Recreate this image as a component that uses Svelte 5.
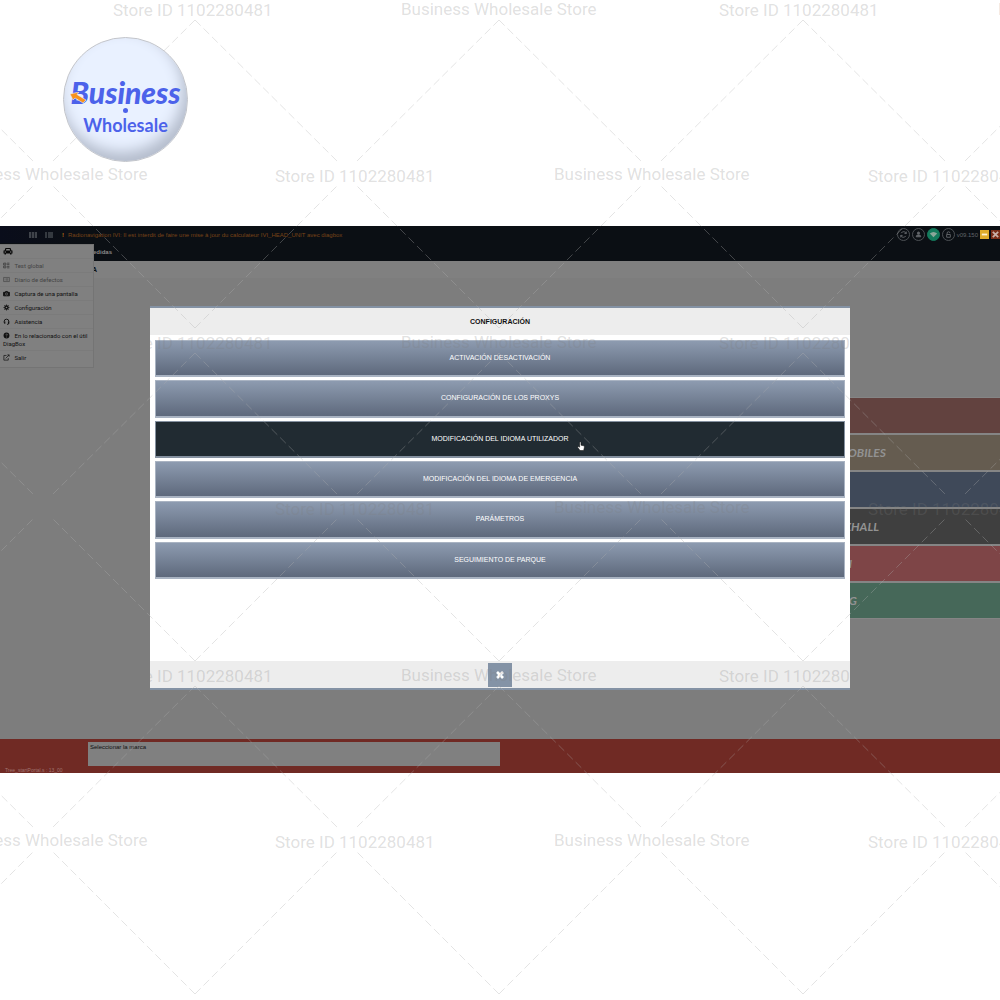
<script lang="ts">
  const options = [
    'ACTIVACIÓN DESACTIVACIÓN',
    'CONFIGURACIÓN DE LOS PROXYS',
    'MODIFICACIÓN DEL IDIOMA UTILIZADOR',
    'MODIFICACIÓN DEL IDIOMA DE EMERGENCIA',
    'PARÁMETROS',
    'SEGUIMIENTO DE PARQUE',
  ];

  let selected = $state(2);

  const menu = [
    { icon: 'test', label: 'Test global', disabled: true },
    { icon: 'list', label: 'Diario de defectos', disabled: true },
    { icon: 'camera', label: 'Captura de una pantalla', disabled: false },
    { icon: 'gear', label: 'Configuración', disabled: false },
    { icon: 'headset', label: 'Asistencia', disabled: false },
    { icon: 'help', label: 'En lo relacionado con el útil DiagBox', disabled: false },
    { icon: 'exit', label: 'Salir', disabled: false },
  ];

  // end is where the label stops, as a share of the bar
  const brands = [
    { label: '', color: '#62423f', end: 0 },
    { label: 'MOBILES', color: '#655c50', end: 77.2 },
    { label: '', color: '#3f4959', end: 0 },
    { label: 'XHALL', color: '#3f3f3f', end: 75.8 },
    { label: 'N', color: '#7e4547', end: 70.4 },
    { label: 'G', color: '#466859', end: 71.4 },
  ];

  const store = 'Store ID 1102280481';
  const name = 'Business Wholesale Store';

  const marks: { x: number; y: number; text: string }[] = [];
  const lines: string[] = [];
  for (let i = 0; i < 3; i++) {
    const y = i * 333;
    marks.push(
      { x: 113, y: y + 16, text: store },
      { x: 401, y: y + 15, text: name },
      { x: 719, y: y + 16, text: store },
      { x: 998, y: y + 15, text: name },
      { x: -48, y: y + 180, text: name },
      { x: 275, y: y + 182, text: store },
      { x: 554, y: y + 180, text: name },
      { x: 868, y: y + 182, text: store },
    );
    for (let k = 0; k < 5; k++) {
      const x = -109 + k * 304;
      lines.push(`M${x} ${y + 20}l144 143M${x} ${y + 20}l-144 143`);
      lines.push(`M${x} ${y + 328}l144 -144M${x} ${y + 328}l-144 -144`);
    }
  }
</script>

<div class="page">
  <header class="banner">
    <div class="logo">
      <span class="logo-name">Business</span>
      <svg class="arrow" viewBox="0 0 16 11"><path d="M0 2L9 0L7 2.5L16 8L13 11L5 6L3 8Z" fill="#f7931e" stroke="#e9f1ff" stroke-width=".6" /></svg>
      <span class="logo-dot"></span>
      <span class="logo-sub">Wholesale</span>
    </div>
  </header>

  <main class="screen">
    <div class="topbar">
      <div class="tools">
        <svg viewBox="0 0 8 6"><path d="M0 1h8M0 3h8M0 5h8" stroke="#51565b" stroke-width="1.4" stroke-dasharray="2.2 .7" /></svg>
        <svg viewBox="0 0 8 6"><path d="M0 1h2M3 1h5M0 3h2M3 3h5M0 5h2M3 5h5" stroke="#43484d" stroke-width="1.4" /></svg>
      </div>
      <p class="warning"><b>!</b>Radionavigation IVI: Il est interdit de faire une mise à jour du calculateur IVI_HEAD_UNIT avec diagbox</p>
      <div class="status">
        <button aria-label="Actualizar"><svg viewBox="0 0 12 12"><path d="M9 5A3 3 0 0 0 3.5 4.5M3 7a3 3 0 0 0 5.5.5M9 2.8V5H7M3 9.2V7h2" /></svg></button>
        <button aria-label="Usuario"><svg viewBox="0 0 12 12"><path d="M3.5 8.5c0-2 1.3-2 2.5-2s2.5 0 2.5 2z" fill="#62666a" /><circle cx="6" cy="4.5" r="1.2" fill="#62666a" /></svg></button>
        <button class="online" aria-label="Red"><svg viewBox="0 0 12 12"><path d="M2 4.8Q6 1.500 10 4.800L6 9Z" fill="#8ba79a" stroke="none" /></svg></button>
        <button aria-label="Bloqueo"><svg viewBox="0 0 12 12"><path d="M4.5 6V4.500a1.5 1.5 0 0 1 3 0M4 6h4v3H4z" /></svg></button>
        <span class="version">v09.150</span>
        <button class="win min" aria-label="Minimizar"><svg viewBox="0 0 10 10"><path d="M2 5h6" /></svg></button>
        <button class="win close" aria-label="Salir"><svg viewBox="0 0 10 10"><path d="M2 2l6 6M8 2L2 8" /></svg></button>
      </div>
    </div>
    <div class="tabs">Medidas</div>
    <div class="crumb">A</div>

    <nav class="menu">
      <div class="menu-head">
        <svg viewBox="0 0 20 16"><path d="M3 7L5 2h10l2 5h2v6h-2v2h-3v-2H6v2H3v-2H1V7z" fill="#080808" /><path d="M5.5 7l1.2-3h6.600l1.2 3z" fill="#808080" /><circle cx="4.5" cy="10" r="1.4" fill="#808080" /><circle cx="15.5" cy="10" r="1.4" fill="#808080" /></svg>
      </div>
      {#each menu as item}
        <button class="menu-item" disabled={item.disabled}>
          <svg viewBox="0 0 12 12" fill="none" stroke="currentColor" stroke-width="1.6">
            {#if item.icon === 'test'}
              <path d="M1 2h4v3H1zM1 7h4v3H1zM7 2h4M7 4.5h4M7 7.5h4M7 10h4" />
            {:else if item.icon === 'list'}
              <path d="M1 2.5h10v7H1zM3 5h1M5 5h4M3 7h1M5 7h4" stroke-width="1.1" />
            {:else if item.icon === 'camera'}
              <path d="M1 4h2.5l1-1.5h3l1 1.5H11v6H1z" fill="currentColor" /><circle cx="6" cy="6.8" r="1.8" stroke="#808080" stroke-width="1" />
            {:else if item.icon === 'gear'}
              <circle cx="6" cy="6" r="2.6" stroke-width="2.4" /><path d="M6 1v2M6 9v2M1 6h2M9 6h2M2.500 2.500l1 1M8.500 8.500l1 1M9.500 2.500l-1 1M3.500 8.500l-1 1" />
            {:else if item.icon === 'headset'}
              <path d="M2 8V6a4 4 0 0 1 8 0v2M10 9q0 2-3 2" /><path d="M3 6v4M9.500 6v4" stroke-width="2" />
            {:else if item.icon === 'help'}
              <circle cx="6" cy="6" r="5" fill="currentColor" stroke="none" /><path d="M4.5 4.500q1.5-1.500 3 0q0 1-1.500 1.800M6 8v1.400" stroke="#808080" stroke-width="1.2" />
            {:else}
              <path d="M6 2.5H1.5v8H9V7M4.5 7.500L10.500 1.500M7.500 1.500h3v3" stroke-width="1.2" />
            {/if}
          </svg>
          <span>{item.label}</span>
        </button>
      {/each}
    </nav>

    <div class="brands">
      {#each brands as brand}
        <a class="brand" href="#marca" style:background={brand.color} aria-label="Marca">
          <span style:width="{brand.end}%">{brand.label}</span>
        </a>
      {/each}
    </div>

    <footer class="bottom">
      <span class="trace">Tree_startPortal.s : 13_00</span>
      <p class="hint">Seleccionar la marca</p>
    </footer>

    <div class="modal" role="dialog" aria-labelledby="title">
      <h1 id="title">CONFIGURACIÓN</h1>
      <div class="options">
        {#each options as option, i}
          <button class="option" class:active={i === selected} onclick={() => (selected = i)}>{option}</button>
        {/each}
      </div>
      <div class="modal-foot">
        <button class="dismiss" aria-label="Cerrar">
          <svg viewBox="0 0 10 10"><path d="M2 2l6 6M8 2L2 8" stroke="#fff" stroke-width="2.8" /></svg>
        </button>
      </div>
      <svg class="pointer" viewBox="0 0 12 16"><path d="M4 1.5q1.2-1 2 0V6l4 1q1.5.5 1 2.5l-1 4.500H4.500L1 9q0-1.500 1.500-1L4 9z" fill="#fff" stroke="#111" stroke-width=".8" /></svg>
    </div>
  </main>

  <svg class="watermark" aria-hidden="true">
    <path d={lines.join('')} />
    {#each marks as mark}
      <text x={mark.x} y={mark.y}>{mark.text}</text>
    {/each}
  </svg>
</div>

<style>
  :global(body) {
    background: #fff;
  }

  .page {
    position: relative;
    min-height: 100vh;
    overflow: hidden;
    font-family: "Liberation Sans", Arial, sans-serif;
    font-size: 6px;
    line-height: 8px;
    color: #111;
  }

  .page *,
  .page {
    box-sizing: border-box;
  }

  button {
    font: inherit;
    color: inherit;
    margin: 0;
    padding: 0;
    border: 0;
    background: none;
    cursor: pointer;
  }

  svg {
    display: block;
    flex: none;
  }

  .banner {
    padding: 37px 63px 64px;
  }

  .logo {
    position: relative;
    z-index: 1;
    display: flex;
    flex-direction: column;
    align-items: center;
    width: 125px;
    height: 125px;
    padding-top: 38px;
    border: 1px solid #c3c5ca;
    border-radius: 50%;
    background: #e9f1ff;
    box-shadow: inset -4px -9px 14px #b4bccc;
    color: #4c62ea;
    font-family: Lato, sans-serif;
  }

  .logo-name {
    font-size: 30px;
    line-height: 32px;
    font-weight: 900;
    font-style: italic;
  }

  .arrow {
    position: absolute;
    left: 6px;
    top: 54px;
    width: 16px;
    height: 11px;
  }

  .logo-dot {
    width: 5px;
    height: 5px;
    border-radius: 50%;
    background: currentColor;
  }

  .logo-sub {
    font-size: 18px;
    line-height: 24px;
    font-weight: 700;
  }

  .screen {
    position: relative;
    display: flex;
    flex-direction: column;
    background: #7d7d7d;
  }

  .topbar {
    display: flex;
    align-items: center;
    height: 17px;
    padding-left: 29px;
    background: linear-gradient(90deg, #0a0d1b, #0b0f14 80px);
  }

  .tools {
    display: flex;
    gap: 8px;
  }

  .tools svg {
    width: 8px;
    height: 6px;
  }

  .warning {
    margin: 0 0 0 9px;
    color: #7a4418;
    white-space: nowrap;
  }

  .warning b {
    margin-right: 4px;
    color: #b87418;
  }

  .status {
    display: flex;
    align-items: center;
    gap: 2px;
    margin-left: auto;
    color: #62666a;
  }

  .status button {
    width: 13px;
    height: 13px;
    border: 1px solid #4c5054;
    border-radius: 50%;
  }

  .status svg {
    width: 100%;
    fill: none;
    stroke: #62666a;
    stroke-width: 1;
  }

  .status .online {
    border-color: #147a5c;
    background: #147a5c;
  }

  .status .win {
    width: 9px;
    height: 9px;
    border: 0;
    border-radius: 0;
  }

  .status .min {
    background: #dfad2b;
  }

  .status .close {
    background: #7a2d18;
  }

  .status .win svg {
    stroke: #fff3d0;
    stroke-width: 2;
  }

  .status .close svg {
    stroke: #c8b0a8;
  }

  .tabs {
    height: 18px;
    padding: 5px 0 0 88px;
    background: #0b0f14;
    color: #8a8a8a;
    font-weight: 700;
  }

  .crumb {
    height: 17px;
    padding: 5px 0 0 92px;
    background: #808080;
    font-size: 7px;
    font-weight: 700;
  }

  .menu {
    position: absolute;
    top: 18px;
    left: 0;
    width: 94px;
    padding-bottom: 3px;
    background: #808080;
    border: 1px solid #747474;
    border-left: 0;
  }

  .menu-head {
    padding: 1px 0 2px 3px;
  }

  .menu-head svg {
    width: 10px;
    height: 10px;
  }

  .menu-item {
    display: block;
    width: 100%;
    padding: 3px 3px 2px;
    border-top: 1px solid #7b7b7b;
    font-family: Roboto, sans-serif;
    line-height: 8px;
    text-align: left;
  }

  .menu-item:disabled {
    color: #444;
  }

  .menu-item svg {
    display: inline-block;
    width: 7px;
    height: 7px;
    margin-right: 3px;
    vertical-align: -1px;
  }

  .brands {
    display: flex;
    flex-direction: column;
    gap: 2px;
    margin-left: 50%;
    padding: 120px 0 121px;
  }

  .brand {
    display: flex;
    align-items: center;
    height: 35px;
    outline: 1px solid #858585;
    color: #929292;
    font-family: Lato, sans-serif;
    font-size: 12px;
    line-height: 16px;
    font-weight: 700;
    font-style: italic;
    text-decoration: none;
  }

  .brand span {
    text-align: right;
  }

  .bottom {
    display: flex;
    height: 34px;
    padding: 3px 0 0 5px;
    background: #702a24;
  }

  .trace {
    align-self: flex-end;
    width: 83px;
    color: #a07470;
    font-size: 5px;
    line-height: 6px;
  }

  .hint {
    width: 41.4%;
    height: 24px;
    margin: 0;
    padding: 1px 2px;
    background: #808080;
  }

  .modal {
    position: absolute;
    top: 80px;
    left: 15%;
    right: 15%;
    display: flex;
    flex-direction: column;
    background: #fff;
    border-top: 2px solid #8492a4;
    border-bottom: 2px solid #8492a4;
  }

  h1 {
    margin: 0;
    padding-top: 1px;
    background: #ededed;
    font-size: 7px;
    line-height: 26px;
    text-align: center;
  }

  .options {
    display: grid;
    grid-auto-rows: 1fr;
    gap: 3px;
    height: 326px;
    padding: 5px 5px 82px;
  }

  .option {
    border: 1px solid #a9b3c2;
    border-bottom-width: 2px;
    background: linear-gradient(#8d9bb0, #5e697c);
    color: #fff;
    font-size: 7px;
  }

  .option.active {
    border-color: #8591a0;
    background: #212b32;
  }

  .modal-foot {
    display: flex;
    justify-content: center;
    padding: 2px 0 1px;
    background: #ededed;
  }

  .dismiss {
    display: grid;
    place-items: center;
    width: 24px;
    height: 24px;
    background: #8493a6;
  }

  .dismiss svg {
    width: 10px;
    height: 10px;
  }

  .pointer {
    position: absolute;
    top: 133px;
    left: 61%;
    width: 8px;
    height: 11px;
  }

  .watermark {
    position: absolute;
    inset: 0;
    width: 100%;
    height: 100%;
    pointer-events: none;
  }

  .watermark path {
    fill: none;
    stroke: rgba(175, 175, 175, 0.34);
    stroke-dasharray: 8 4;
  }

  .watermark text {
    fill: rgba(125, 125, 125, 0.24);
    font-family: Roboto, sans-serif;
    font-size: 17px;
  }
</style>
